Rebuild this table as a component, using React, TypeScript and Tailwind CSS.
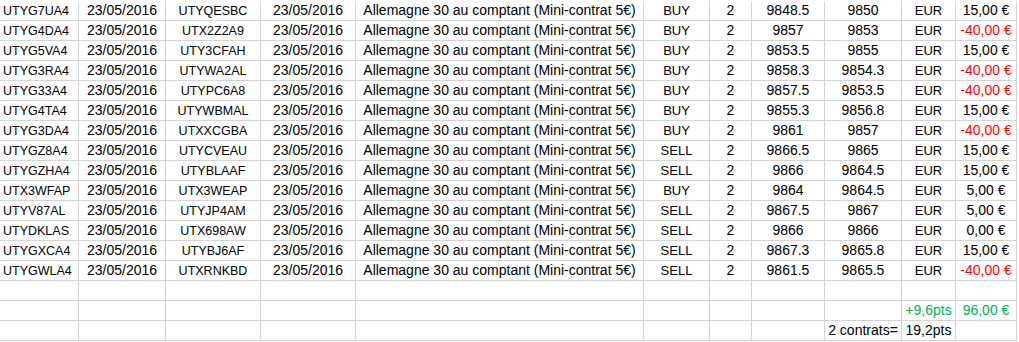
const rows = [
  ['UTYG7UA4', 'UTYQESBC', 'BUY', '9848.5', '9850', '15,00 €'],
  ['UTYG4DA4', 'UTX2Z2A9', 'BUY', '9857', '9853', '-40,00 €'],
  ['UTYG5VA4', 'UTY3CFAH', 'BUY', '9853.5', '9855', '15,00 €'],
  ['UTYG3RA4', 'UTYWA2AL', 'BUY', '9858.3', '9854.3', '-40,00 €'],
  ['UTYG33A4', 'UTYPC6A8', 'BUY', '9857.5', '9853.5', '-40,00 €'],
  ['UTYG4TA4', 'UTYWBMAL', 'BUY', '9855.3', '9856.8', '15,00 €'],
  ['UTYG3DA4', 'UTXXCGBA', 'BUY', '9861', '9857', '-40,00 €'],
  ['UTYGZ8A4', 'UTYCVEAU', 'SELL', '9866.5', '9865', '15,00 €'],
  ['UTYGZHA4', 'UTYBLAAF', 'SELL', '9866', '9864.5', '15,00 €'],
  ['UTX3WFAP', 'UTX3WEAP', 'BUY', '9864', '9864.5', '5,00 €'],
  ['UTYV87AL', 'UTYJP4AM', 'SELL', '9867.5', '9867', '5,00 €'],
  ['UTYDKLAS', 'UTX698AW', 'SELL', '9866', '9866', '0,00 €'],
  ['UTYGXCA4', 'UTYBJ6AF', 'SELL', '9867.3', '9865.8', '15,00 €'],
  ['UTYGWLA4', 'UTXRNKBD', 'SELL', '9861.5', '9865.5', '-40,00 €'],
];

const cell = 'h-[20px] border-r border-b border-[#d4d4d4] flex items-center justify-center whitespace-nowrap overflow-visible';

function Row({ cells }: { cells: { text?: string; cls?: string }[] }) {
  return (
    <>
      {cells.map((c, i) => (
        <div key={i} className={`${cell} ${i === 0 ? 'justify-start pl-[3px]' : ''} ${c.cls || ''}`}>
          {c.text}
        </div>
      ))}
    </>
  );
}

const blank = (n: number) => Array.from({ length: n }, () => ({}));

export default function App() {
  return (
    <div className="w-[1019px] h-[342px] bg-white overflow-hidden pt-px text-[14px] text-black" style={{ fontFamily: '"Liberation Sans", Arial, sans-serif' }}>
      <div className="grid grid-cols-[79px_87px_95px_95px_288px_66px_42px_73px_77px_54px_61px]">
        {rows.map((r, i) => (
          <Row
            key={i}
            cells={[
              { text: r[0], cls: 'text-[12.5px] pt-px' },
              { text: '23/05/2016' },
              { text: r[1], cls: 'text-[12.5px] pt-px' },
              { text: '23/05/2016' },
              { text: 'Allemagne 30 au comptant (Mini-contrat 5€)' },
              { text: r[2], cls: 'text-[13px]' },
              { text: '2' },
              { text: r[3] },
              { text: r[4] },
              { text: 'EUR', cls: 'text-[13px]' },
              { text: r[5], cls: r[5].startsWith('-') ? 'text-[#ff0000]' : '' },
            ]}
          />
        ))}
        <Row cells={blank(11)} />
        <Row cells={[...blank(9), { text: '+9,6pts', cls: 'text-[#00b050]' }, { text: '96,00 €', cls: 'text-[#00b050]' }]} />
        <Row cells={[...blank(8), { text: '2 contrats=' }, { text: '19,2pts' }, {}]} />
      </div>
    </div>
  );
}
